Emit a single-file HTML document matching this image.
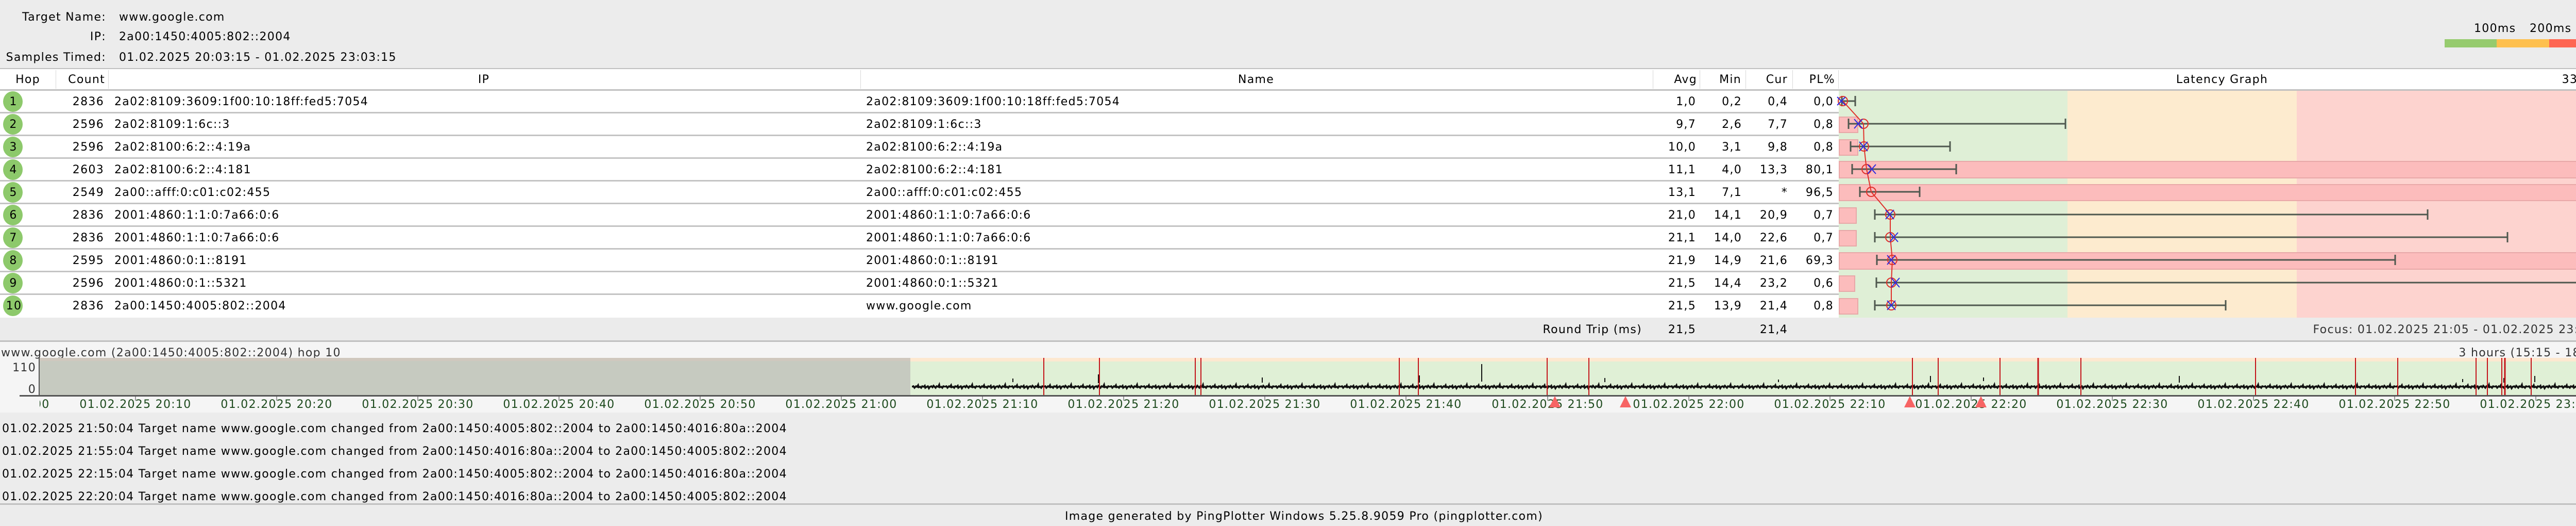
<!DOCTYPE html>
<html><head><meta charset="utf-8">
<style>
html,body{margin:0;padding:0;background:#ececec;}
svg{display:block;}
text{font-family:"DejaVu Sans","Liberation Sans",sans-serif;font-size:22px;letter-spacing:1.3px;fill:#000;}
.r{text-anchor:end;}
.c{text-anchor:middle;}
.ax{fill:#1d4a1d;}
.g{fill:#333;}
</style></head><body>
<svg width="5062" height="1020" viewBox="0 0 5062 1020" xmlns="http://www.w3.org/2000/svg">
<defs>
<pattern id="noise" x="1770" y="738" width="64" height="24" patternUnits="userSpaceOnUse">
<path d="M0 12 L3 11 L5 14 L8 11 L10 12 L12 9 L13 13 L16 12 L18 14 L20 11 L23 12 L25 10 L26 14 L29 12 L31 11 L33 15 L35 12 L38 11 L40 13 L42 10 L44 12 L46 14 L48 11 L51 12 L53 8 L54 13 L57 12 L59 14 L61 11 L64 12" fill="none" stroke="#111" stroke-width="3.5"/>
</pattern>
</defs>
<rect x="0" y="0" width="5062" height="133" fill="#ececec"/>
<text class="r" x="206" y="40">Target Name:</text>
<text x="231" y="40">www.google.com</text>
<text class="r" x="206" y="78">IP:</text>
<text x="231" y="78">2a00:1450:4005:802::2004</text>
<text class="r" x="206" y="118">Samples Timed:</text>
<text x="231" y="118">01.02.2025 20:03:15 - 01.02.2025 23:03:15</text>
<text x="4802" y="62">100ms</text>
<text x="4910" y="62">200ms</text>
<rect x="4745" y="76" width="101" height="16" fill="#96cb6e"/>
<rect x="4846" y="76" width="102" height="16" fill="#fec04f"/>
<rect x="4948" y="76" width="101" height="16" fill="#fe6652"/>

<rect x="0" y="132" width="5062" height="2" fill="#c0c0c0"/>
<rect x="0" y="134" width="5062" height="482" fill="#fff"/>
<rect x="0" y="173" width="5062" height="3" fill="#c0c0c0"/>
<g fill="#d8d8d8">
<rect x="108" y="136" width="1" height="36"/><rect x="210" y="136" width="1" height="36"/>
<rect x="1670" y="136" width="1" height="36"/><rect x="3208" y="136" width="1" height="36"/>
<rect x="3299" y="136" width="1" height="36"/><rect x="3388" y="136" width="1" height="36"/>
<rect x="3479" y="136" width="1" height="36"/><rect x="3568" y="136" width="1" height="36"/>
</g>
<text class="c" x="54" y="161">Hop</text>
<text class="r" x="204" y="161">Count</text>
<text class="c" x="939" y="161">IP</text>
<text class="c" x="2438" y="161">Name</text>
<text class="r" x="3294" y="161">Avg</text>
<text class="r" x="3380" y="161">Min</text>
<text class="r" x="3470" y="161">Cur</text>
<text class="r" x="3562" y="161">PL%</text>
<text class="c" x="4313" y="161">Latency Graph</text>
<text class="r" x="5054" y="161">335ms</text>

<rect x="3569" y="176" width="444" height="440" fill="#dfefd6"/>
<rect x="4013" y="176" width="445" height="440" fill="#fdebcf"/>
<rect x="4458" y="176" width="600" height="440" fill="#fdd3cf"/>

<g fill="#c4c4c4">
<rect x="0" y="217" width="3569" height="3"/><rect x="0" y="261" width="3569" height="3"/>
<rect x="0" y="305" width="3569" height="3"/><rect x="0" y="349" width="3569" height="3"/>
<rect x="0" y="393" width="3569" height="3"/><rect x="0" y="437" width="3569" height="3"/>
<rect x="0" y="481" width="3569" height="3"/><rect x="0" y="525" width="3569" height="3"/>
<rect x="0" y="569" width="3569" height="3"/>
</g>

<g fill="#fcbcbc" stroke="#e8a8a8" stroke-width="2">
<rect x="3570" y="227" width="36" height="30"/>
<rect x="3570" y="271" width="36" height="30"/>
<rect x="3570" y="313" width="1488" height="32"/>
<rect x="3570" y="358" width="1488" height="31"/>
<rect x="3570" y="403" width="33" height="30"/>
<rect x="3570" y="447" width="33" height="30"/>
<rect x="3570" y="490" width="1488" height="32"/>
<rect x="3570" y="535" width="30" height="30"/>
<rect x="3570" y="579" width="36" height="30"/>
</g>

<g stroke="#4f584f" stroke-width="3" fill="none">
<path d="M3575 196H3601M3575 186V206M3601 186V206"/>
<path d="M3588 240H4009M3588 230V250M4009 230V250"/>
<path d="M3592 284H3785M3592 274V294M3785 274V294"/>
<path d="M3595 328H3797M3595 318V338M3797 318V338"/>
<path d="M3610 372H3726M3610 362V382M3726 362V382"/>
<path d="M3639 416H4712M3639 406V426M4712 406V426"/>
<path d="M3639 460H4867M3639 450V470M4867 450V470"/>
<path d="M3643 504H4649M3643 494V514M4649 494V514"/>
<path d="M3642 548H5049M3642 538V558M5049 538V558"/>
<path d="M3639 592H4320M3639 582V602M4320 582V602"/>
</g>
<polyline points="3577,196 3617,240 3618,284 3623,328 3632,372 3669,416 3669,460 3673,504 3671,548 3671,592" fill="none" stroke="#e0302a" stroke-width="2"/>
<g fill="none" stroke="#e0302a" stroke-width="2">
<circle cx="3577" cy="196" r="9"/><circle cx="3617" cy="240" r="9"/><circle cx="3618" cy="284" r="9"/>
<circle cx="3623" cy="328" r="9"/><circle cx="3632" cy="372" r="9"/><circle cx="3669" cy="416" r="9"/>
<circle cx="3669" cy="460" r="9"/><circle cx="3673" cy="504" r="9"/><circle cx="3671" cy="548" r="9"/>
<circle cx="3671" cy="592" r="9"/>
</g>
<g fill="none" stroke="#2a2ae0" stroke-width="2">
<path d="M3566 188L3582 204M3582 188L3566 204"/>
<path d="M3599 231L3615 249M3615 231L3599 249"/>
<path d="M3609 275L3625 293M3625 275L3609 293"/>
<path d="M3625 319L3641 337M3641 319L3625 337"/>
<path d="M3660 407L3676 425M3676 407L3660 425"/>
<path d="M3668 451L3684 469M3684 451L3668 469"/>
<path d="M3663 495L3679 513M3679 495L3663 513"/>
<path d="M3671 539L3687 557M3687 539L3671 557"/>
<path d="M3663 583L3679 601M3679 583L3663 601"/>
</g>

<g fill="#8dc96b">
<ellipse cx="25" cy="197" rx="19" ry="20"/><ellipse cx="25" cy="241" rx="19" ry="20"/>
<ellipse cx="25" cy="285" rx="19" ry="20"/><ellipse cx="25" cy="329" rx="19" ry="20"/>
<ellipse cx="25" cy="373" rx="19" ry="20"/><ellipse cx="25" cy="417" rx="19" ry="20"/>
<ellipse cx="25" cy="461" rx="19" ry="20"/><ellipse cx="25" cy="505" rx="19" ry="20"/>
<ellipse cx="25" cy="549" rx="19" ry="20"/><ellipse cx="25" cy="593" rx="19" ry="20"/>
</g>
<g>
<text class="c" x="26" y="204">1</text><text class="c" x="26" y="248">2</text><text class="c" x="26" y="292">3</text>
<text class="c" x="26" y="336">4</text><text class="c" x="26" y="380">5</text><text class="c" x="26" y="424">6</text>
<text class="c" x="26" y="468">7</text><text class="c" x="26" y="512">8</text><text class="c" x="26" y="556">9</text>
<text class="c" x="27" y="600">10</text>
</g>
<g>
<text class="r" x="202" y="204">2836</text><text class="r" x="202" y="248">2596</text><text class="r" x="202" y="292">2596</text>
<text class="r" x="202" y="336">2603</text><text class="r" x="202" y="380">2549</text><text class="r" x="202" y="424">2836</text>
<text class="r" x="202" y="468">2836</text><text class="r" x="202" y="512">2595</text><text class="r" x="202" y="556">2596</text>
<text class="r" x="202" y="600">2836</text>
</g>
<text x="222" y="204">2a02:8109:3609:1f00:10:18ff:fed5:7054</text><text x="1681" y="204">2a02:8109:3609:1f00:10:18ff:fed5:7054</text>
<text x="222" y="248">2a02:8109:1:6c::3</text><text x="1681" y="248">2a02:8109:1:6c::3</text>
<text x="222" y="292">2a02:8100:6:2::4:19a</text><text x="1681" y="292">2a02:8100:6:2::4:19a</text>
<text x="222" y="336">2a02:8100:6:2::4:181</text><text x="1681" y="336">2a02:8100:6:2::4:181</text>
<text x="222" y="380">2a00::afff:0:c01:c02:455</text><text x="1681" y="380">2a00::afff:0:c01:c02:455</text>
<text x="222" y="424">2001:4860:1:1:0:7a66:0:6</text><text x="1681" y="424">2001:4860:1:1:0:7a66:0:6</text>
<text x="222" y="468">2001:4860:1:1:0:7a66:0:6</text><text x="1681" y="468">2001:4860:1:1:0:7a66:0:6</text>
<text x="222" y="512">2001:4860:0:1::8191</text><text x="1681" y="512">2001:4860:0:1::8191</text>
<text x="222" y="556">2001:4860:0:1::5321</text><text x="1681" y="556">2001:4860:0:1::5321</text>
<text x="222" y="600">2a00:1450:4005:802::2004</text><text x="1681" y="600">www.google.com</text>

<g>
<text class="r" x="3292" y="204">1,0</text><text class="r" x="3381" y="204">0,2</text><text class="r" x="3470" y="204">0,4</text><text class="r" x="3559" y="204">0,0</text>
<text class="r" x="3292" y="248">9,7</text><text class="r" x="3381" y="248">2,6</text><text class="r" x="3470" y="248">7,7</text><text class="r" x="3559" y="248">0,8</text>
<text class="r" x="3292" y="292">10,0</text><text class="r" x="3381" y="292">3,1</text><text class="r" x="3470" y="292">9,8</text><text class="r" x="3559" y="292">0,8</text>
<text class="r" x="3292" y="336">11,1</text><text class="r" x="3381" y="336">4,0</text><text class="r" x="3470" y="336">13,3</text><text class="r" x="3559" y="336">80,1</text>
<text class="r" x="3292" y="380">13,1</text><text class="r" x="3381" y="380">7,1</text><text class="r" x="3470" y="380">*</text><text class="r" x="3559" y="380">96,5</text>
<text class="r" x="3292" y="424">21,0</text><text class="r" x="3381" y="424">14,1</text><text class="r" x="3470" y="424">20,9</text><text class="r" x="3559" y="424">0,7</text>
<text class="r" x="3292" y="468">21,1</text><text class="r" x="3381" y="468">14,0</text><text class="r" x="3470" y="468">22,6</text><text class="r" x="3559" y="468">0,7</text>
<text class="r" x="3292" y="512">21,9</text><text class="r" x="3381" y="512">14,9</text><text class="r" x="3470" y="512">21,6</text><text class="r" x="3559" y="512">69,3</text>
<text class="r" x="3292" y="556">21,5</text><text class="r" x="3381" y="556">14,4</text><text class="r" x="3470" y="556">23,2</text><text class="r" x="3559" y="556">0,6</text>
<text class="r" x="3292" y="600">21,5</text><text class="r" x="3381" y="600">13,9</text><text class="r" x="3470" y="600">21,4</text><text class="r" x="3559" y="600">0,8</text>
</g>

<rect x="0" y="616" width="5062" height="45" fill="#ebebeb"/>
<text class="r" x="3187" y="646">Round Trip (ms)</text>
<text class="r" x="3292" y="646">21,5</text>
<text class="r" x="3470" y="646">21,4</text>
<text class="r g" x="5036" y="646">Focus: 01.02.2025 21:05 - 01.02.2025 23:03</text>

<rect x="0" y="660" width="5062" height="3" fill="#c0c0c0"/>
<rect x="0" y="663" width="5062" height="137" fill="#f5f5f5"/>
<text x="2" y="691" class="g">www.google.com (2a00:1450:4005:802::2004) hop 10</text>
<text class="r g" x="5058" y="691">3 hours (15:15 - 18:15)</text>
<rect x="77" y="694" width="1690" height="73" fill="#c6cac0"/>
<rect x="77" y="694" width="1690" height="6" fill="#d0c8be"/>
<rect x="1767" y="694" width="3244" height="73" fill="#e0f0d6"/>
<rect x="1767" y="694" width="3244" height="7" fill="#fde8d0"/>
<rect x="1770" y="738" width="3241" height="24" fill="url(#noise)"/>
<g stroke="#111" stroke-width="2">
<path d="M1966 741V734M2132 743V726M2450 742V732M2876 740V706M2755 742V728M3115 741V733M3452 741V736M3850 739V732M3747 741V729M4230 742V729M4780 741V735M4860 742V733M4920 741V729"/>
</g>
<g stroke="#c4141a" stroke-width="2">
<path d="M2026 694V767M2134 694V767M2320 694V767M2331 694V767M2716 694V767M2753 694V767M3003 694V767M3084 694V767M3712 694V767M3762 694V767M3882 694V767M4039 694V767M4378 694V767M4572 694V767M4654 694V767M4806 694V767M4828 694V767M4856 694V767M4913 694V767"/>
</g>
<path d="M3956 694V767M4862 694V767" stroke="#c4141a" stroke-width="3"/>
<rect x="75" y="694" width="2" height="74" fill="#555"/>
<rect x="38" y="766" width="4973" height="3" fill="#555"/>
<text class="r g" x="70" y="720">110</text>
<text class="r g" x="70" y="762">0</text>
<text x="5026" y="722" style="fill:#c00000">30</text>
<g fill="#999">
<rect x="262" y="769" width="2" height="8"/><rect x="536" y="769" width="2" height="8"/><rect x="810" y="769" width="2" height="8"/>
<rect x="1084" y="769" width="2" height="8"/><rect x="1358" y="769" width="2" height="8"/><rect x="1632" y="769" width="2" height="8"/>
<rect x="1906" y="769" width="2" height="8"/><rect x="2180" y="769" width="2" height="8"/><rect x="2454" y="769" width="2" height="8"/>
<rect x="2728" y="769" width="2" height="8"/><rect x="3003" y="769" width="2" height="8"/><rect x="3277" y="769" width="2" height="8"/>
<rect x="3551" y="769" width="2" height="8"/><rect x="3825" y="769" width="2" height="8"/><rect x="4099" y="769" width="2" height="8"/>
<rect x="4373" y="769" width="2" height="8"/><rect x="4647" y="769" width="2" height="8"/><rect x="4921" y="769" width="2" height="8"/>
</g>
<svg x="77" y="769" width="4934" height="30" overflow="hidden">
<g transform="translate(-77,-769)">
<text class="c ax" x="-12" y="791">01.02.2025 20:00</text>
<text class="c ax" x="263" y="791">01.02.2025 20:10</text>
<text class="c ax" x="537" y="791">01.02.2025 20:20</text>
<text class="c ax" x="811" y="791">01.02.2025 20:30</text>
<text class="c ax" x="1085" y="791">01.02.2025 20:40</text>
<text class="c ax" x="1359" y="791">01.02.2025 20:50</text>
<text class="c ax" x="1633" y="791">01.02.2025 21:00</text>
<text class="c ax" x="1907" y="791">01.02.2025 21:10</text>
<text class="c ax" x="2181" y="791">01.02.2025 21:20</text>
<text class="c ax" x="2455" y="791">01.02.2025 21:30</text>
<text class="c ax" x="2729" y="791">01.02.2025 21:40</text>
<text class="c ax" x="3004" y="791">01.02.2025 21:50</text>
<text class="c ax" x="3278" y="791">01.02.2025 22:00</text>
<text class="c ax" x="3552" y="791">01.02.2025 22:10</text>
<text class="c ax" x="3826" y="791">01.02.2025 22:20</text>
<text class="c ax" x="4100" y="791">01.02.2025 22:30</text>
<text class="c ax" x="4374" y="791">01.02.2025 22:40</text>
<text class="c ax" x="4648" y="791">01.02.2025 22:50</text>
<text class="c ax" x="4922" y="791">01.02.2025 23:00</text>
</g>
</svg>
<g fill="#f76464">
<path d="M3018 768L3029 790H3007Z"/><path d="M3155 768L3166 790H3144Z"/>
<path d="M3707 768L3718 790H3696Z"/><path d="M3845 768L3856 790H3834Z"/>
</g>

<rect x="0" y="800" width="5062" height="177" fill="#ececec"/>
<text x="4" y="838">01.02.2025 21:50:04 Target name www.google.com changed from 2a00:1450:4005:802::2004 to 2a00:1450:4016:80a::2004</text>
<text x="4" y="882">01.02.2025 21:55:04 Target name www.google.com changed from 2a00:1450:4016:80a::2004 to 2a00:1450:4005:802::2004</text>
<text x="4" y="926">01.02.2025 22:15:04 Target name www.google.com changed from 2a00:1450:4005:802::2004 to 2a00:1450:4016:80a::2004</text>
<text x="4" y="970">01.02.2025 22:20:04 Target name www.google.com changed from 2a00:1450:4016:80a::2004 to 2a00:1450:4005:802::2004</text>
<rect x="0" y="976" width="5062" height="3" fill="#c0c0c0"/>
<rect x="0" y="979" width="5062" height="41" fill="#ececec"/>
<text class="c" x="2531" y="1008">Image generated by PingPlotter Windows 5.25.8.9059 Pro (pingplotter.com)</text>
</svg>
</body></html>
